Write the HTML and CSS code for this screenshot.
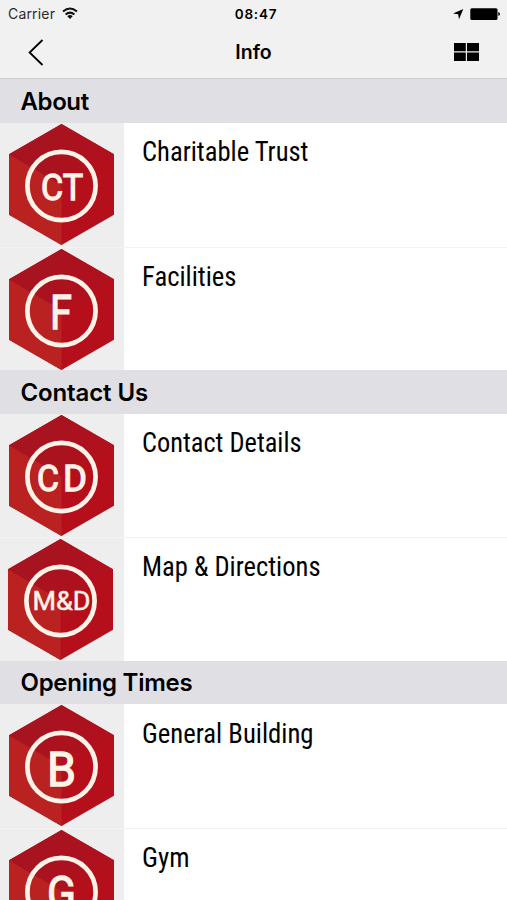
FILE: index.html
```html
<!DOCTYPE html>
<html lang="en">
<head>
<meta charset="utf-8">
<title>Info</title>
<link rel="stylesheet" href="styles.css">
</head>
<body>
<svg class="defs" width="0" height="0" aria-hidden="true">
  <defs>
    <linearGradient id="lid" x1="0" x2="1" y1="0" y2=".35"><stop offset=".4" stop-color="#a7131f"/><stop offset="1" stop-color="#b2101d"/></linearGradient>
    <g id="badge">
      <path fill="#b60f1c" d="M52.5 0 105 30.3V90.7L52.5 121 0 90.7V30.3z"/>
      <path fill="#ba2222" d="M0 30.3 52.5 61v60L0 90.7z"/>
      <path fill="url(#lid)" d="M52.5 0 105 30.3 52.5 61 0 30.3z"/>
      <circle cx="52.5" cy="62" r="34.1" fill="none" stroke="#fff3e8" stroke-width="4.7"/>
    </g>
  </defs>
</svg>
<header class="top">
  <div class="status">
    <div class="carrier">Carrier
      <svg width="16" height="13" viewBox="0 0 16 13" fill="none" stroke="#111" stroke-width="2"><path d="M1 4.6q7-6.2 14 0M3.6 7.5q4.4-3.8 8.8 0"/><path fill="#111" stroke="none" d="M5.3 9.2q2.7-2.2 5.4 0L8 12z"/></svg>
    </div>
    <div class="clock">08:47</div>
    <div class="power">
      <svg width="47" height="14" viewBox="0 0 47 14"><path d="M0 6.4 10.3 2 6 12.3 5.2 7.2z"/><rect x="17.3" y="1.2" width="27.2" height="11.8" rx="1.5"/><path d="M45.3 5q1.7.3 1.7 2t-1.7 2z"/></svg>
    </div>
  </div>
  <nav class="nav">
    <svg width="16" height="27" viewBox="0 0 16 27" fill="none" stroke="#000" stroke-width="1.8"><path d="M14.5 1 1.6 13.5 14.5 26"/></svg>
    <h1>Info</h1>
    <svg width="25" height="18" viewBox="0 0 25 18"><path d="M0 0h11.8v8.3H0zM13 0h12v8.3H13zM0 9.6h11.8V18H0zM13 9.6h12V18H13z"/></svg>
  </nav>
</header>
<main>
  <h2><span class="h-about">About</span></h2>
  <div class="row"><div class="thumb"><svg viewBox="0 0 105 121"><use href="#badge"/><text x="32" y="76" textLength="42" lengthAdjust="spacingAndGlyphs">CT</text></svg></div><svg class="label" viewBox="0 0 300 40"><text x="-1" y="28" textLength="166.5" lengthAdjust="spacingAndGlyphs">Charitable Trust</text></svg></div>
  <div class="row"><div class="thumb"><svg viewBox="0 0 105 121"><use href="#badge"/><text class="tall" x="41" y="80" textLength="22" lengthAdjust="spacingAndGlyphs">F</text></svg></div><svg class="label" viewBox="0 0 300 40"><text x="-1" y="28" textLength="94.5" lengthAdjust="spacingAndGlyphs">Facilities</text></svg></div>
  <h2><span class="h-contact">Contact Us</span></h2>
  <div class="row"><div class="thumb"><svg viewBox="0 0 105 121"><use href="#badge"/><text x="28" y="76" textLength="22" lengthAdjust="spacingAndGlyphs">C</text><text x="54" y="76" textLength="24" lengthAdjust="spacingAndGlyphs">D</text></svg></div><svg class="label" viewBox="0 0 300 40"><text x="-1" y="28" textLength="159.5" lengthAdjust="spacingAndGlyphs">Contact Details</text></svg></div>
  <div class="row"><div class="thumb thumb-left"><svg viewBox="0 0 105 121"><use href="#badge"/><text class="small" x="24.5" y="71" textLength="58" lengthAdjust="spacingAndGlyphs">M&amp;D</text></svg></div><svg class="label" viewBox="0 0 300 40"><text x="-1" y="28" textLength="178.5" lengthAdjust="spacingAndGlyphs">Map &amp; Directions</text></svg></div>
  <h2><span class="h-opening">Opening Times</span></h2>
  <div class="row"><div class="thumb"><svg viewBox="0 0 105 121"><use href="#badge"/><text class="tall" x="38" y="80.5" textLength="29" lengthAdjust="spacingAndGlyphs">B</text></svg></div><svg class="label" viewBox="0 0 300 40"><text x="-1" y="28" textLength="171.5" lengthAdjust="spacingAndGlyphs">General Building</text></svg></div>
  <div class="row"><div class="thumb"><svg viewBox="0 0 105 121"><use href="#badge"/><text class="tall" x="38" y="80" textLength="29" lengthAdjust="spacingAndGlyphs">G</text></svg></div><svg class="label" viewBox="0 0 300 40"><text x="-1" y="28" textLength="47.5" lengthAdjust="spacingAndGlyphs">Gym</text></svg></div>
</main>
</body>
</html>
```
FILE: styles.css
```css
* { box-sizing: border-box; }
html, body { margin: 0; height: 900px; overflow: hidden; }
body { background: #fff; color: #000; font-family: Inter, sans-serif; }
svg { display: block; flex: none; }
.defs { position: absolute; }
main { height: 820.6px; overflow: hidden; }
.top { height: 79.4px; background: #f1f1f2; border-bottom: 1px solid #cfced2; }
.status {
  display: grid;
  grid-template-columns: 1fr auto 1fr;
  align-items: center;
  height: 27px;
  padding: 0 7px 0 8px;
  font-size: 14px;
}
.carrier { display: flex; align-items: center; gap: 7px; color: #2b2b2b; letter-spacing: .18px; }
.clock { font-size: 13.5px; font-weight: 600; letter-spacing: .75px; padding-left: 4px; }
.power { display: flex; justify-content: flex-end; }
.nav {
  display: grid;
  grid-template-columns: 1fr auto 1fr;
  align-items: center;
  height: 50px;
  padding: 0 28px;
}
.nav > svg:last-child { justify-self: end; }
.nav h1 { margin: 0; font-size: 19.5px; font-weight: 600; line-height: 24px; }
h2 {
  display: flex;
  align-items: center;
  margin: 0;
  height: 43.6px;
  padding: 0 0 0 20.5px;
  background: #e0dfe4;
  font-size: 24px;
  font-weight: 600;
  line-height: 30px;
}
.h-about { letter-spacing: -.4px; padding-top: 1.5px; }
.h-contact { letter-spacing: -.12px; padding-top: 2px; }
.h-opening { letter-spacing: -.28px; padding-top: 1px; }
.row { display: flex; height: 123.55px; }
.row + .row { border-top: 1.5px solid #f3f3f4; }
.thumb { width: 123.5px; flex: none; padding: 1.1px 0 0 9px; background: #eeeeef; }
.thumb-left { padding-left: 8px; }
.thumb svg { width: 105px; height: 121px; }
.thumb text { font-family: Roboto, sans-serif; font-size: 37px; fill: #fff3e8; stroke: #fff3e8; stroke-width: 1.3px; }
.thumb .tall { font-size: 49px; }
.thumb .small { font-size: 25px; stroke-width: .5px; }
.label { width: 300px; height: 40px; margin: 10.2px 0 0 19.4px; overflow: visible; }
.label text { font-family: "Roboto Condensed", Roboto, sans-serif; font-size: 27.5px; }
```
